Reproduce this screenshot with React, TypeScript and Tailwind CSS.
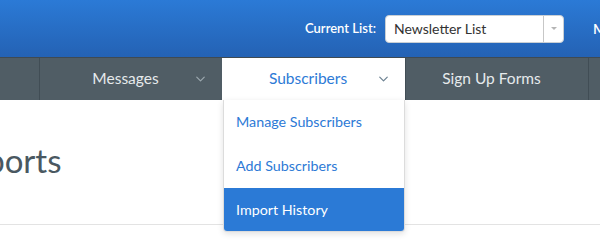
import { ChevronDown } from 'lucide-react'

const font = { fontFamily: 'Lato, "Noto Sans", "Liberation Sans", sans-serif' }

function NavCell({ label, chevron, active }: { label: string; chevron?: boolean; active?: boolean }) {
  return (
    <div
      className={
        'relative flex h-full w-[183px] shrink-0 items-center pr-[11px] ' +
        (active ? 'self-end bg-white h-[39px]' : 'border-l border-[#414d55]')
      }
    >
      <span className={'flex-1 text-center text-[15.5px] ' + (active ? 'text-[#2d7ad6]' : 'text-[#e6eaec]')}>
        {label}
      </span>
      {chevron && (
        <ChevronDown
          className={'absolute right-[14px] top-1/2 -translate-y-1/2 ' + (active ? 'text-[#6f8494]' : 'text-[#9aa6ad]')}
          size={15}
          strokeWidth={2}
        />
      )}
    </div>
  )
}

export default function App() {
  return (
    <div className="relative h-[245px] w-[600px] overflow-hidden bg-white" style={font}>
      <header className="flex h-[57px] items-center whitespace-nowrap bg-gradient-to-b from-[#2b7ad6] to-[#2462b4] pl-[305px]">
        <span className="w-[68px] shrink-0 text-[13px] font-semibold text-white">Current List:</span>
        <div className="ml-[12px] flex h-[28px] w-[179px] shrink-0 items-center rounded-[4px] border border-[#c9cfd4] bg-white">
          <span className="flex-1 pl-[8px] text-[14px] text-[#333]">Newsletter List</span>
          <div className="flex h-full w-[20px] items-center justify-center border-l border-[#c7c7c7]">
            <span className="h-0 w-0 border-x-[3px] border-t-[3px] border-x-transparent border-t-[#b5b5b5]" />
          </div>
        </div>
        <span className="ml-[29px] text-[14px] font-semibold text-white">My Account</span>
      </header>

      <nav className="flex h-[43px] border-t border-[#3f4a52] bg-[#505d65]">
        <div className="h-full w-[39px] shrink-0" />
        <NavCell label="Messages" chevron />
        <NavCell label="Subscribers" chevron active />
        <NavCell label="Sign Up Forms" />
        <div className="h-full flex-1 border-l border-[#414d55]" />
      </nav>

      <div className="border-b border-[#e3e3e3] pb-[44px] pt-[40px]">
        <h1 className="ml-[-50px] text-[33px] leading-[40px] text-[#4a5861]">Imports</h1>
      </div>

      <div className="absolute left-[223px] top-[100px] w-[182px] overflow-hidden rounded-b-[4px] border-x border-b border-[#dcdcdc] bg-white shadow-[0_2px_6px_rgba(0,0,0,0.12)]">
        <div className="flex h-[44px] items-center pl-[12px] text-[14.3px] text-[#2d7ad6]">Manage Subscribers</div>
        <div className="flex h-[44px] items-center pl-[12px] text-[14.3px] text-[#2d7ad6]">Add Subscribers</div>
        <div className="flex h-[43px] items-center bg-[#2b7ad6] pl-[12px] text-[14.3px] text-white">Import History</div>
      </div>
    </div>
  )
}
